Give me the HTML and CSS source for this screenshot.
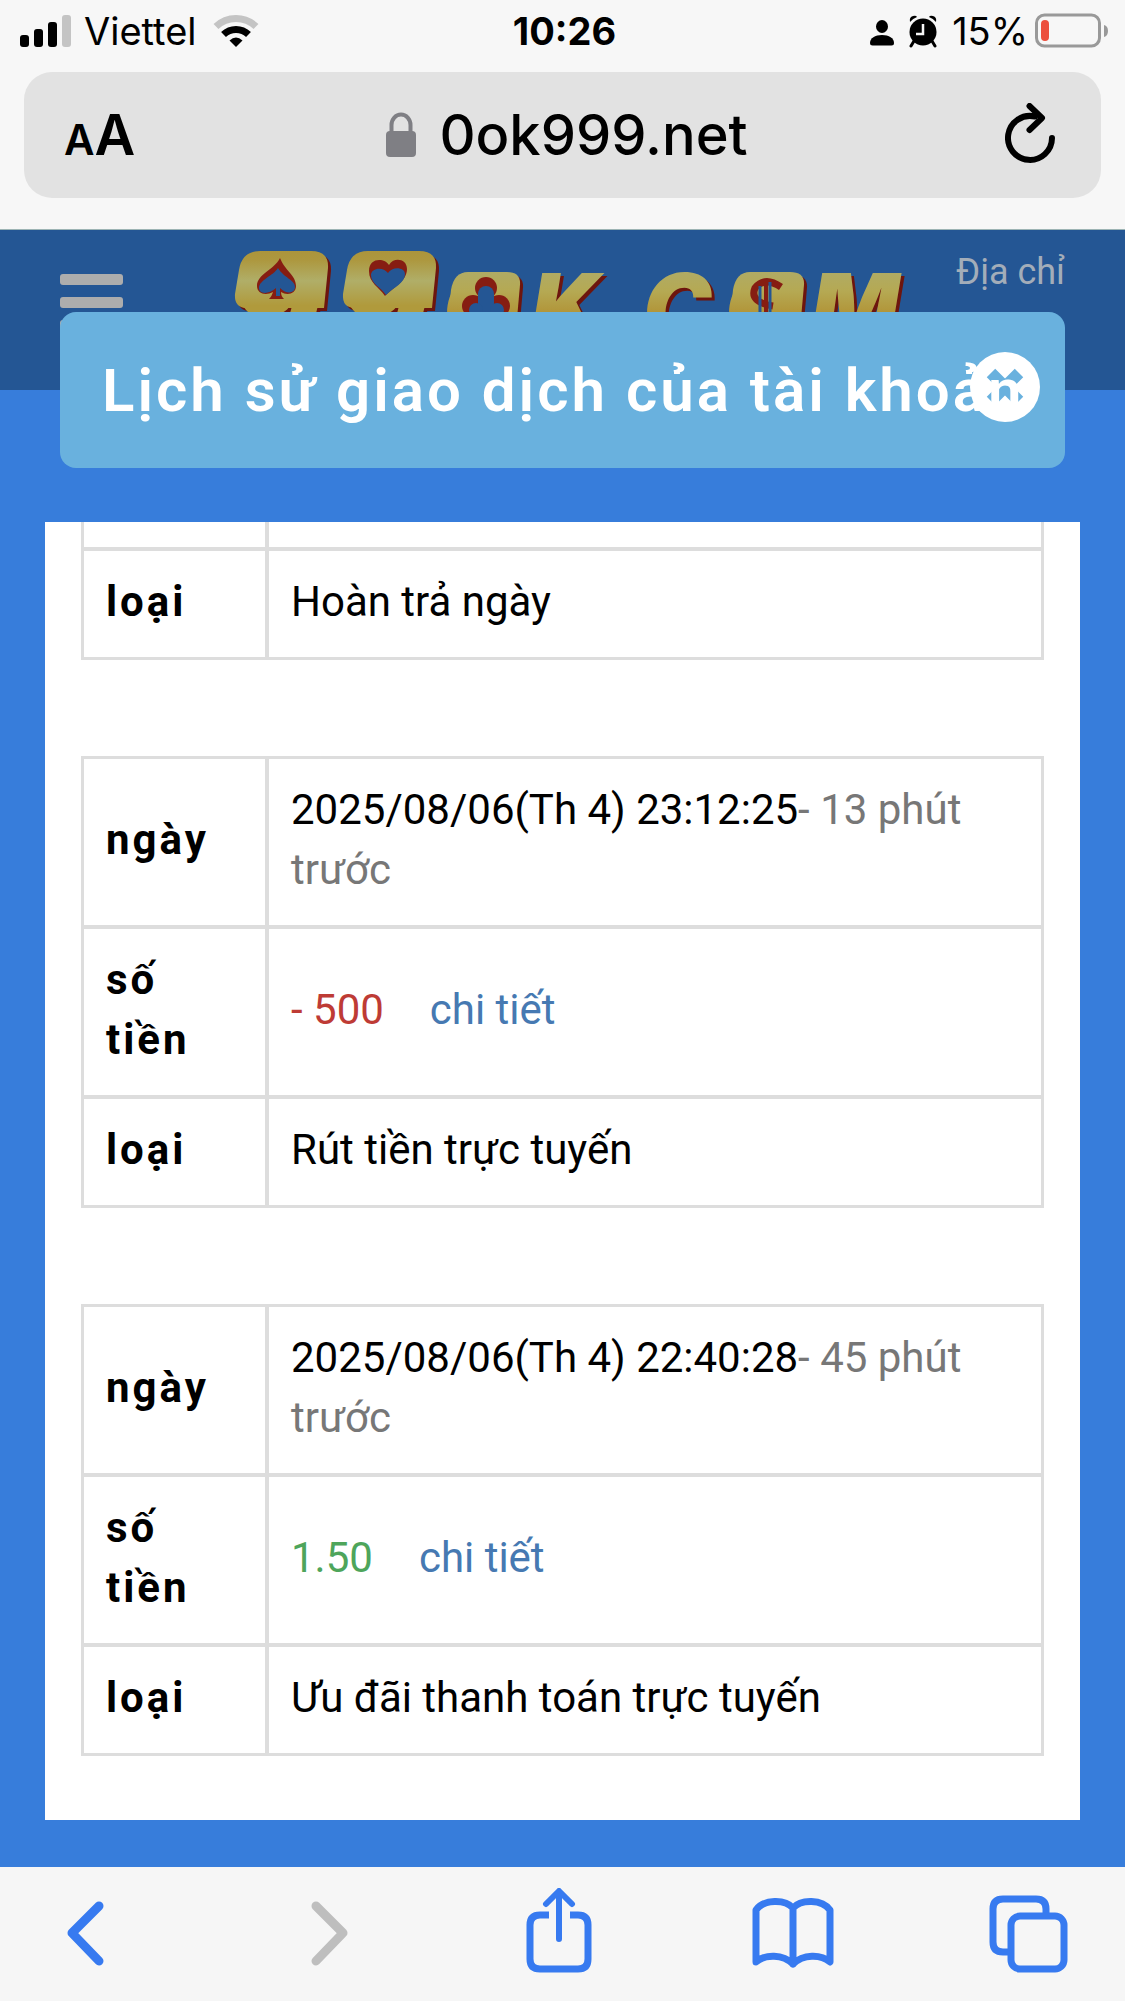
FILE: index.html
```html
<!DOCTYPE html>
<html lang="vi">
<head>
  <meta charset="UTF-8" />
  <meta name="viewport" content="width=device-width, initial-scale=1.0" />
  <title>Lịch sử giao dịch của tài khoản</title>
  <link rel="stylesheet" href="styles.css">
</head>
<body>
  <div class="browser-top">
    <div class="status-bar">
      <div class="status-left">
        <svg width="52" height="34" viewBox="0 0 52 34">
          <rect x="0" y="21" width="9" height="12" rx="3"/>
          <rect x="14" y="15" width="9" height="18" rx="3"/>
          <rect x="28" y="8" width="9" height="25" rx="3"/>
          <rect x="42" y="1" width="9" height="32" rx="3" fill="#c4c4c4"/>
        </svg>
        <span>Viettel</span>
        <svg class="wifi" width="46" height="34" viewBox="0 0 46 34">
          <path d="M3 12.500A29 29 0 0 1 43 12.500" fill="none" stroke="#c4c4c4" stroke-width="7"/>
          <path d="M10.500 20.500A18 18 0 0 1 35.500 20.500" fill="none" stroke="#000" stroke-width="7"/>
          <path d="M16.500 26.500Q23 20.500 29.500 26.500L23 33Z"/>
        </svg>
      </div>
      <div class="clock">10:26</div>
      <div class="status-right">
        <svg width="24" height="34" viewBox="0 0 24 34">
          <ellipse cx="12" cy="12.500" rx="6" ry="6.500"/>
          <path d="M0 29C0 24 5 21 12 21s12 3 12 8q0 2.500-2.500 2.500h-19Q0 31.500 0 29Z"/>
        </svg>
        <svg width="28" height="34" viewBox="0 0 28 34">
          <path d="M5 27l-3 5M23 27l3 5" stroke="#000" stroke-width="3" stroke-linecap="round"/>
          <circle cx="14" cy="18" r="13.500"/>
          <path d="M1 8Q0 3 4 2q3-1 4 1Q3 5 1 8ZM27 8q1-5-3-6-3-1-4 1 5 2 7 5Z"/>
          <path d="M14 10v10H7" fill="none" stroke="#f7f7f7" stroke-width="2.500"/>
        </svg>
        <span>15%</span>
        <svg width="74" height="36" viewBox="0 0 74 36">
          <rect x="1.500" y="2" width="63" height="31" rx="8" fill="none" stroke="#999" stroke-width="3"/>
          <rect x="6" y="7" width="8" height="21" rx="4" fill="#ec4e3c"/>
          <path d="M69 12q4 1 4 6t-4 6Z" fill="#999"/>
        </svg>
      </div>
    </div>
    <div class="address-bar">
      <button class="text-size" aria-label="Cỡ chữ"><span class="small-a">A</span><span>A</span></button>
      <div class="address">
        <svg width="32" height="46" viewBox="0 0 32 46">
          <path d="M6.500 22V13a9.500 10.500 0 0 1 19 0v9" fill="none" stroke="#7f7f84" stroke-width="4"/>
          <rect x="1" y="19" width="30" height="26" rx="4" fill="#7f7f84"/>
        </svg>
        <span>0ok999.net</span>
      </div>
      <button class="reload" aria-label="Tải lại">
        <svg width="52" height="64" viewBox="0 0 52 64">
          <path d="M30 13.500A22 22 0 1 0 47 35" fill="none" stroke="#000" stroke-width="6" stroke-linecap="round"/>
          <path d="M24.500 3L37 15 24.500 27" fill="none" stroke="#000" stroke-width="6" stroke-linecap="round" stroke-linejoin="round"/>
        </svg>
      </button>
    </div>
  </div>

  <div class="page">
    <div class="site-header">
      <button class="menu-btn" aria-label="Menu"><i></i><i></i><i></i></button>
      <svg class="logo" viewBox="0 0 833 140">
        <defs>
          <linearGradient id="gold-big" gradientUnits="userSpaceOnUse" x1="0" y1="18" x2="0" y2="100">
            <stop offset="0" stop-color="#ab933a"/>
            <stop offset="0.15" stop-color="#ad983f"/>
            <stop offset="0.4" stop-color="#b0ae68"/>
            <stop offset="0.7" stop-color="#b09a3c"/>
          </linearGradient>
          <linearGradient id="gold-small" gradientUnits="userSpaceOnUse" x1="0" y1="42" x2="0" y2="90">
            <stop offset="0" stop-color="#b0ab64"/>
            <stop offset="0.4" stop-color="#b5a953"/>
            <stop offset="1" stop-color="#b08e30"/>
          </linearGradient>
        </defs>
        <g class="logo-text">
          <text class="big" fill="url(#gold-big)" x="109 216" y="120">99</text>
          <text class="small" fill="url(#gold-small)" x="320 408 490 520 602 688" y="110">OK.COM</text>
          <!-- plates that carry the card suits -->
          <g fill="url(#gold-big)">
            <path d="M137 21H188Q206 21 205 38L201 78H124Q111 78 112 64L116 40Q119 21 137 21Z"/>
            <path d="M245 21H296Q314 21 313 38L309 78H232Q219 78 220 64L224 40Q227 21 245 21Z"/>
          </g>
          <g fill="url(#gold-small)">
            <path d="M345 42H384Q398 42 397 55L393 100H324L328 60Q331 42 345 42Z"/>
            <path d="M627 42H667Q682 42 681 55L677 100H606L610 60Q613 42 627 42Z"/>
          </g>
        </g>
        <g fill="#861d12">
          <path d="M157 28C151 40 134 44 134 56c0 8 9 10 16 6-1 3-2 5-4 7h15c-2-2-3-4-3-7 6 4 15 2 15-6 0-11-11-15-16-28Z"/>
          <path d="M266 35C262 28 246 27 246 41c0 12 10 16 16 25 8-8 22-15 22-27 0-11-14-12-18-4Z"/>
          <circle cx="363" cy="58" r="11"/><circle cx="350" cy="76" r="11"/><circle cx="376" cy="76" r="11"/>
        </g>
        <g fill="#245694">
          <path d="M155 38C150 46 136 50 136 58c0 6 9 7 17 0v8h4v-8c7 7 15 5 15-1 0-7-11-9-17-19Z"/>
          <path d="M265 43C260 36 248 38 248 45c0 9 10 12 15 20 8-8 19-12 19-21 0-7-13-8-17-1Z"/>
          <path d="M355 64a8 8 0 0 1 16 0v18h-16Z"/><circle cx="353" cy="80" r="7"/><circle cx="374" cy="80" r="7"/>
        </g>
        <g fill="none">
          <path d="M658 57Q642 46 632 58 626 72 650 76" stroke="#861d12" stroke-width="7"/>
          <path d="M637 56v26M647 52v30" stroke="#245694" stroke-width="3"/>
          <path d="M643 50v33" stroke="#861d12" stroke-width="4"/>
        </g>
      </svg>
      <a class="domain-link" href="#">Địa chỉ</a>
    </div>

    <div class="modal-title">
      <h1>Lịch sử giao dịch của tài khoản</h1>
      <button class="close-btn" aria-label="Đóng">
        <svg width="70" height="70" viewBox="0 0 70 70">
          <circle cx="35" cy="35" r="35" fill="#fff"/>
          <path d="M21 21L49 49M49 21L21 49" stroke="#69b1de" stroke-width="12"/>
        </svg>
      </button>
    </div>

    <div class="panel">
      <table class="record">
        <tr class="row-cut"><th></th><td></td></tr>
        <tr><th>loại</th><td>Hoàn trả ngày</td></tr>
      </table>

      <table class="record">
        <tr><th>ngày</th><td>2025/08/06(Th 4) 23:12:25<span class="ago">- 13 phút trước</span></td></tr>
        <tr><th>số tiền</th><td><span class="minus">- 500</span><a class="detail" href="#">chi tiết</a></td></tr>
        <tr><th>loại</th><td>Rút tiền trực tuyến</td></tr>
      </table>

      <table class="record">
        <tr><th>ngày</th><td>2025/08/06(Th 4) 22:40:28<span class="ago">- 45 phút trước</span></td></tr>
        <tr><th>số tiền</th><td><span class="plus">1.50</span><a class="detail" href="#">chi tiết</a></td></tr>
        <tr><th>loại</th><td>Ưu đãi thanh toán trực tuyến</td></tr>
      </table>
    </div>
  </div>

  <div class="toolbar">
    <button aria-label="Quay lại">
      <svg width="80" height="90" viewBox="0 0 80 90"><path d="M54 18L27 45l27 28" stroke-width="9"/></svg>
    </button>
    <button aria-label="Tiếp" disabled>
      <svg width="80" height="90" viewBox="0 0 80 90"><path d="M35 18L62 45 35 73" stroke-width="9"/></svg>
    </button>
    <button aria-label="Chia sẻ">
      <svg width="80" height="90" viewBox="0 0 80 90">
        <path d="M33 27H24Q14 27 14 37v34q0 10 10 10h38q10 0 10-10V37q0-10-10-10h-8" stroke-width="7" stroke-linecap="butt"/>
        <path d="M43 51V4M30 16L43 3l13 13" stroke-width="6"/>
      </svg>
    </button>
    <button aria-label="Dấu trang">
      <svg width="82" height="90" viewBox="0 0 82 90">
        <path d="M41 20C33 11 12 11 4 22v52C13 66 31 66 41 76 51 66 69 66 78 74V22C70 11 49 11 41 20V76" stroke-width="7"/>
      </svg>
    </button>
    <button aria-label="Thẻ">
      <svg width="80" height="90" viewBox="0 0 80 90">
        <path d="M22 64H14Q4 64 4 54V21Q4 11 14 11H47q10 0 10 10v6" stroke-width="7" stroke-linecap="butt"/>
        <rect x="22" y="28" width="53" height="53" rx="9" stroke-width="7"/>
      </svg>
    </button>
  </div>
</body>
</html>
```

FILE: styles.css
```css
* {
  box-sizing: border-box;
}
body {
  margin: 0;
  min-height: 100vh;
  display: flex;
  flex-direction: column;
  font-family: Roboto, 'Noto Sans', sans-serif;
  font-size: 42px;
  line-height: 60px;
  color: #000;
  background: #f6f6f6;
}
button {
  padding: 0;
  border: 0;
  background: none;
  font: inherit;
  color: inherit;
  cursor: pointer;
}
svg {
  display: block;
}
a {
  text-decoration: none;
}

/* browser chrome */
.browser-top {
  padding: 0 24px 31px;
  background: #f7f7f7;
  border-bottom: 1px solid #9db4b4;
  font-family: Inter, 'Noto Sans', sans-serif;
}
.status-bar {
  display: grid;
  grid-template-columns: 1fr auto 1fr;
  align-items: center;
  height: 72px;
  margin: 0 -8px 0 -4px;
  padding-bottom: 10px;
  font-size: 38px;
}
.status-left,
.status-right {
  display: flex;
  align-items: center;
  gap: 12px;
}
.status-left .wifi {
  margin-left: 4px;
}
.status-right {
  justify-content: flex-end;
  gap: 15px;
}
.status-right span {
  margin-right: -8px;
}
.clock {
  font-weight: 700;
}
.address-bar {
  display: grid;
  grid-template-columns: 1fr auto 1fr;
  align-items: center;
  height: 126px;
  padding: 0 44px 0 40px;
  border-radius: 28px;
  background: #e2e2e2;
}
.text-size {
  justify-self: start;
  padding-top: 4px;
  font-size: 56px;
  font-weight: 600;
}
.small-a {
  font-size: 42px;
}
.address {
  display: flex;
  align-items: center;
  gap: 22px;
  padding-left: 12px;
  font-size: 56px;
  font-weight: 500;
}
.reload {
  justify-self: end;
}

/* site */
.page {
  flex-grow: 1;
  padding-bottom: 47px;
  background: #377ddb;
}
.site-header {
  display: flex;
  height: 160px;
  padding: 0 60px;
  background: #245694;
}
.menu-btn {
  display: flex;
  flex-direction: column;
  gap: 12px;
  width: 63px;
  padding-top: 44px;
}
.menu-btn i {
  width: 100%;
  height: 11px;
  border-radius: 3px;
  background: #adadad;
}
.logo {
  flex: 1;
  min-width: 0;
  height: 140px;
}
.logo-text {
  font-family: Inter, sans-serif;
  font-style: italic;
  font-weight: 900;
  filter: drop-shadow(3px 3px 0 #6d150e);
}
.logo-text .big {
  font-size: 132px;
}
.logo-text .small {
  font-size: 92px;
}
.domain-link {
  padding-top: 12px;
  font-size: 36px;
  color: #a3adb9;
}

.modal-title {
  position: relative;
  display: flex;
  align-items: center;
  height: 156px;
  margin: -78px 60px 54px;
  padding: 2px 42px 0;
  border-radius: 16px;
  background: #69b1de;
}
.modal-title h1 {
  position: relative;
  z-index: 1;
  margin: 0;
  font-size: 60px;
  font-weight: 600;
  letter-spacing: 3px;
  white-space: nowrap;
  color: #fff;
}
.close-btn {
  position: absolute;
  right: 25px;
  top: 40px;
}

.panel {
  margin: 0 45px;
  padding: 0 36px 64px;
  background: #fff;
}
.record {
  width: 100%;
  border: 3px solid #ddd;
  border-spacing: 0;
}
.record:first-child {
  border-top: 0;
}
.record + .record {
  margin-top: 96px;
}
.record th,
.record td {
  padding: 21px 22px 25px;
  text-align: left;
  vertical-align: middle;
}
.record th {
  width: 185px;
  border-right: 4px solid #ddd;
  letter-spacing: 3px;
}
.record tr + tr th,
.record tr + tr td {
  border-top: 4px solid #ddd;
}
.record .row-cut th,
.record .row-cut td {
  height: 25px;
  padding: 0;
}
.ago {
  color: #777;
}
.minus {
  color: #be3b35;
}
.plus {
  color: #4ea55b;
}
.detail {
  margin-left: 46px;
  color: #4679b2;
}

/* bottom toolbar */
.toolbar {
  display: flex;
  justify-content: space-between;
  height: 134px;
  padding: 21px 56px 0 45px;
  background: #f6f6f6;
}
.toolbar svg {
  fill: none;
  stroke: #377af0;
  stroke-linecap: round;
  stroke-linejoin: round;
}
.toolbar button {
  height: 90px;
}
.toolbar button:disabled svg {
  stroke: #bebebe;
}
```
